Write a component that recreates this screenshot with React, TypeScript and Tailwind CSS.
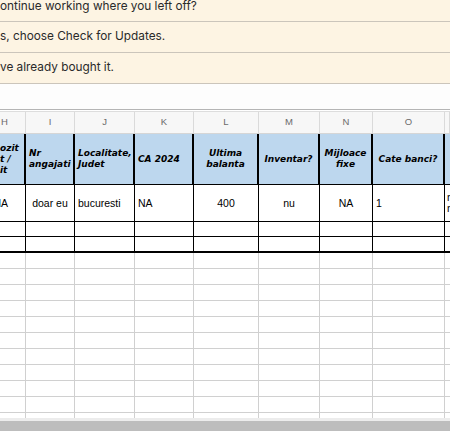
import React from "react";

const grid = "grid grid-cols-[26px_49px_60px_59px_65px_61px_53px_72px_1fr]";
const hdr = "font-['DejaVu_Sans',sans-serif] font-bold italic text-[9px] leading-[11px] text-black";
const data = "font-['Liberation_Sans',sans-serif] text-[10.5px] leading-[12px] text-black";

function Letters() {
  const letters = ["H", "I", "J", "K", "L", "M", "N", "O", ""];
  return (
    <div className={`${grid} h-[22px] bg-[#f7f7f7] border-b border-[#d6d6d6]`}>
      {letters.map((l, i) => (
        <div
          key={i}
          className={`flex items-center ${i === 0 ? "justify-start pl-[1px]" : "justify-center"} border-r border-[#dadada] font-['Liberation_Sans',sans-serif] text-[9.5px] text-[#6b6b6b]`}
        >
          {l}
        </div>
      ))}
    </div>
  );
}

function HeaderRow() {
  const cell = "border-r-2 border-black flex items-center overflow-hidden";
  return (
    <div className={`${grid} h-[51px] bg-[#bdd7ee] border-b border-black ${hdr}`}>
      <div className={`${cell} justify-start`}>
        <div className="flex flex-col">
          <span>ozit</span>
          <span>t /</span>
          <span>it</span>
        </div>
      </div>
      <div className={`${cell} pl-[3px]`}>
        <div className="flex flex-col">
          <span>Nr</span>
          <span>angajati</span>
        </div>
      </div>
      <div className={`${cell} pl-[3px]`}>
        <div className="flex flex-col">
          <span>Localitate,</span>
          <span>Judet</span>
        </div>
      </div>
      <div className={`${cell} pl-[3px]`}>CA 2024</div>
      <div className={`${cell} justify-center text-center`}>
        <div className="flex flex-col">
          <span>Ultima</span>
          <span>balanta</span>
        </div>
      </div>
      <div className={`${cell} justify-center`}>Inventar?</div>
      <div className={`${cell} justify-center text-center`}>
        <div className="flex flex-col">
          <span>Mijloace</span>
          <span>fixe</span>
        </div>
      </div>
      <div className={`${cell} justify-center whitespace-nowrap`}>Cate banci?</div>
      <div className="overflow-hidden" />
    </div>
  );
}

function DataRow() {
  const cell = "border-r border-black flex items-center overflow-hidden whitespace-nowrap";
  return (
    <div className={`${grid} h-[37px] border-b border-black ${data}`}>
      <div className={`${cell} justify-end pr-[17px]`}>NA</div>
      <div className={`${cell} justify-center`}>doar eu</div>
      <div className={`${cell} pl-[3px]`}>bucuresti</div>
      <div className={`${cell} pl-[3px]`}>NA</div>
      <div className={`${cell} justify-center`}>400</div>
      <div className={`${cell} justify-center`}>nu</div>
      <div className={`${cell} justify-center`}>NA</div>
      <div className={`${cell} pl-[3px]`}>1</div>
      <div className="flex items-center overflow-hidden pl-[2px]">
        <div className="flex flex-col leading-[11px]">
          <span>nu</span>
          <span>nu</span>
        </div>
      </div>
    </div>
  );
}

function LineRow({ h, bottom, line }: { h: string; bottom: string; line: string }) {
  return (
    <div className={`${grid} ${h} ${bottom}`}>
      {Array.from({ length: 9 }).map((_, i) => (
        <div key={i} className={i < 8 ? line : ""} />
      ))}
    </div>
  );
}

export default function App() {
  return (
    <div className="w-[450px] h-[431px] overflow-hidden bg-white flex flex-col">
      <div className="bg-[#fdf4e3] font-['Inter',sans-serif] text-[11.8px] text-[#2a2a2a]">
        <div className="h-[22px] border-b border-[#cbc5bb] leading-[12px] whitespace-nowrap">
          ontinue working where you left off?
        </div>
        <div className="h-[31px] border-b border-[#cbc5bb] flex items-center whitespace-nowrap">
          s, choose Check for Updates.
        </div>
        <div className="h-[31px] border-b border-[#cbc5bb] flex items-center whitespace-nowrap">
          ve already bought it.
        </div>
      </div>
      <div className="h-[25px] bg-[#fdfdfd]" />
      <div className="h-[3px] border-t border-b border-t-[#b5b5b5] border-b-[#dddddd] bg-white" />
      <Letters />
      <HeaderRow />
      <DataRow />
      <LineRow h="h-[15px]" bottom="border-b border-black" line="border-r border-black" />
      <LineRow h="h-[16px]" bottom="border-b-2 border-black" line="border-r border-black" />
      {Array.from({ length: 10 }).map((_, i) => (
        <LineRow key={i} h="h-[16px]" bottom="border-b border-[#d0d0d0]" line="border-r border-[#d0d0d0]" />
      ))}
      <LineRow h="h-[5px]" bottom="" line="border-r border-[#d0d0d0]" />
      <div className="h-[3px] bg-[#ececec]" />
      <div className="flex-1 bg-[#bdbdbd]" />
    </div>
  );
}
